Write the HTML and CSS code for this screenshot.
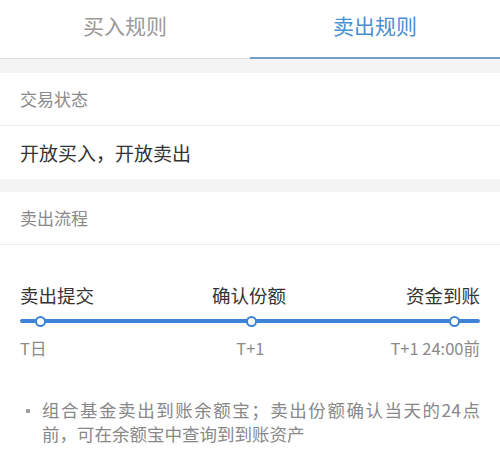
FILE: index.html
```html
<!DOCTYPE html>
<html lang="zh-CN">
<head>
<meta charset="utf-8">
<link rel="stylesheet" href="styles.css">
</head>
<body>
<div class="tabs">
  <div class="tab">买入规则</div>
  <div class="tab active">卖出规则</div>
</div>
<div class="card first">
  <div class="card-head">交易状态</div>
  <div class="card-row">开放买入，开放卖出</div>
</div>
<div class="card last">
  <div class="card-head">卖出流程</div>
  <div class="flow">
    <div class="flow-labels">
      <span>卖出提交</span>
      <span class="mid-label">确认份额</span>
      <span>资金到账</span>
    </div>
    <div class="track">
      <span class="dot"></span>
      <span class="dot mid"></span>
      <span class="dot"></span>
    </div>
    <div class="flow-times">
      <span>T日</span>
      <span class="mid-time">T+1</span>
      <span>T+1 24:00前</span>
    </div>
  </div>
  <div class="note">
    <span class="bullet"></span>
    <p>组合基金卖出到账余额宝；卖出份额确认当天的24点前，可在余额宝中查询到到账资产</p>
  </div>
</div>
</body>
</html>
```
FILE: styles.css
```css
html, body {
  margin: 0;
  padding: 0;
  background: #f4f4f4;
  font-family: "Noto Sans CJK SC", "Noto Sans", sans-serif;
  height: 100%;
}
body {
  display: flex;
  flex-direction: column;
}
.tabs {
  display: flex;
  background: #fff;
}
.tab {
  flex: 1;
  text-align: center;
  font-size: 21px;
  line-height: 30px;
  padding-top: 10px;
  padding-bottom: 18px;
  color: #9a9a9a;
  border-bottom: 1px solid #dcdcdc;
}
.tab.active {
  color: #4a8fd2;
  padding-bottom: 17px;
  border-bottom: 2px solid #749fc6;
}
.card {
  background: #fff;
  margin-top: 14px;
}
.card.last {
  margin-top: 13px;
  flex: 1;
}
.card-head {
  height: 52px;
  line-height: 52px;
  padding-left: 20px;
  font-size: 17px;
  color: #8a8a8a;
  border-bottom: 1px solid #ececec;
}
.card-row {
  height: 53px;
  line-height: 53px;
  padding-left: 20px;
  font-size: 19px;
  color: #333;
}
.flow {
  padding: 37px 20px 0;
}
.flow-labels {
  display: flex;
  justify-content: space-between;
  font-size: 18.5px;
  line-height: 26px;
  color: #333;
}
.mid-label {
  margin-left: -2px;
}
.track {
  margin-top: 11px;
  height: 4px;
  border-radius: 2px;
  background: #3d84d6;
  display: flex;
  align-items: center;
  justify-content: space-between;
  padding: 0 20px 0 15px;
}
.dot {
  width: 7px;
  height: 7px;
  border: 2px solid #3d84d6;
  border-radius: 50%;
  background: #fff;
  flex: none;
}
.dot.mid {
  margin-left: 7px;
}
.flow-times {
  display: flex;
  justify-content: space-between;
  margin-top: 14px;
  font-size: 16.5px;
  line-height: 22px;
  color: #8a8a8a;
}
.mid-time {
  margin-left: 64px;
}
.note {
  display: flex;
  align-items: flex-start;
  padding: 39px 20px 0 26px;
}
.bullet {
  width: 4px;
  height: 4px;
  background: #a0a0a0;
  margin-top: 11px;
  margin-right: 12px;
  flex: none;
}
.note p {
  margin: 0;
  font-size: 17.5px;
  line-height: 24px;
  color: #888;
  text-align: justify;
}
```
